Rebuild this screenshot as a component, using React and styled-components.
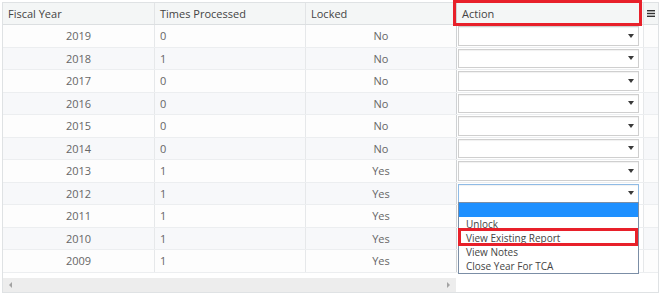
import React from "react";
import styled, { createGlobalStyle } from "styled-components";

const GlobalStyle = createGlobalStyle`
  body {
    margin: 0;
    background: #fff;
    font-family: "Open Sans", "Liberation Sans", sans-serif;
  }
`;

const COLS = "152px 151px 151px 187px 14px";

const rows = [
  { year: 2019, times: 0, locked: "No" },
  { year: 2018, times: 1, locked: "No" },
  { year: 2017, times: 0, locked: "No" },
  { year: 2016, times: 0, locked: "No" },
  { year: 2015, times: 0, locked: "No" },
  { year: 2014, times: 0, locked: "No" },
  { year: 2013, times: 1, locked: "Yes" },
  { year: 2012, times: 1, locked: "Yes", open: true },
  { year: 2011, times: 1, locked: "Yes" },
  { year: 2010, times: 1, locked: "Yes" },
  { year: 2009, times: 1, locked: "Yes" },
];

const options = ["", "Unlock", "View Existing Report", "View Notes", "Close Year For TCA"];

const Grid = styled.div`
  margin: 2px 0 0 2px;
  width: 655px;
  border: 1px solid #dfe2e4;
  font-size: 11px;
  color: #666;
`;

const HeaderRow = styled.div`
  display: grid;
  grid-template-columns: ${COLS};
  height: 22px;
  background: #f4f6f6;
  border-bottom: 1px solid #dcdfe1;
  box-sizing: border-box;
`;

const HeaderCell = styled.div`
  position: relative;
  display: flex;
  align-items: center;
  padding: 0 5px;
  color: #444;
  border-right: 1px solid ${(p) => (p.$edge ? "#cfd2d4" : "#e2e4e6")};
  box-sizing: border-box;
`;

// red annotation frame drawn over a header cell or a list option
const Callout = styled.div`
  position: absolute;
  left: ${(p) => p.$l}px;
  right: ${(p) => p.$r}px;
  top: ${(p) => p.$t}px;
  bottom: ${(p) => p.$b}px;
  border: 3px solid #e8202a;
  pointer-events: none;
  z-index: 3;
`;

const MenuButton = styled.div`
  display: flex;
  align-items: center;
  justify-content: center;
`;

const Row = styled.div`
  display: grid;
  grid-template-columns: ${COLS};
  height: 22.5px;
  box-sizing: border-box;
  border-bottom: 1px solid #eceef0;
  background: ${(p) => (p.$alt ? "#f7f8fa" : "#fdfdfd")};
`;

const Cell = styled.div`
  display: flex;
  align-items: center;
  justify-content: ${(p) => p.$align || "flex-start"};
  padding: 0 5px;
  border-right: 1px solid ${(p) => (p.$edge ? "#cfd2d4" : "#e6e8ea")};
  box-sizing: border-box;
`;

const ActionCell = styled.div`
  display: flex;
  padding: 1px 4px 1px 1px;
  background: #fff;
  border-right: 1px solid #e6e8ea;
  box-sizing: border-box;
`;

const Select = styled.div`
  position: relative;
  flex: 1;
  display: flex;
  align-items: center;
  justify-content: flex-end;
  padding-right: 4px;
  background: #fff;
  border: 1px solid ${(p) => (p.$focus ? "#8fbbe6" : "#cfcfcf")};
  box-shadow: inset 0 1px 1px rgba(0, 0, 0, 0.06);
  box-sizing: border-box;
`;

const Caret = styled.span`
  width: 0;
  height: 0;
  border-left: 3px solid transparent;
  border-right: 3px solid transparent;
  border-top: 4px solid #3a3a3a;
`;

const List = styled.div`
  position: absolute;
  left: -1px;
  right: -1px;
  top: 100%;
  background: #fff;
  border: 1px solid #7b8ea6;
  z-index: 2;
`;

const Option = styled.div`
  position: relative;
  height: 14px;
  line-height: 14px;
  padding-left: 7px;
  font-size: 10px;
  color: #444;
  background: ${(p) => (p.$active ? "#1e90ff" : "#fff")};
`;

const Footer = styled.div`
  display: grid;
  grid-template-columns: 453px 1fr;
  padding-top: 5px;
`;

const Scrollbar = styled.div`
  height: 14px;
  background: #ededed;
  display: flex;
  align-items: center;
  justify-content: space-between;
  padding: 0 6px;
`;

const Arrow = styled.span`
  width: 0;
  height: 0;
  border-top: 3px solid transparent;
  border-bottom: 3px solid transparent;
  ${(p) =>
    p.$dir === "left"
      ? "border-right: 3px solid #a3a3a3;"
      : "border-left: 3px solid #a3a3a3;"}
`;

function ActionSelect({ open }) {
  return (
    <Select $focus={open}>
      <Caret />
      {open && (
        <List>
          {options.map((o, i) => (
            <Option key={i} $active={i === 0}>
              {o || "\u00a0"}
              {o === "View Existing Report" && <Callout $l={-1} $r={0} $t={-3} $b={-1} />}
            </Option>
          ))}
        </List>
      )}
    </Select>
  );
}

export default function App() {
  return (
    <>
      <GlobalStyle />
      <Grid>
        <HeaderRow>
          <HeaderCell>Fiscal Year</HeaderCell>
          <HeaderCell>Times Processed</HeaderCell>
          <HeaderCell $edge>Locked</HeaderCell>
          <HeaderCell>
            Action
            <Callout $l={-4} $r={1} $t={-3} $b={-2} />
          </HeaderCell>
          <MenuButton>
            <svg width="8" height="7" viewBox="0 0 8 7">
              <rect x="0" y="0" width="8" height="1.4" fill="#333" />
              <rect x="0" y="2.8" width="8" height="1.4" fill="#333" />
              <rect x="0" y="5.6" width="8" height="1.4" fill="#333" />
            </svg>
          </MenuButton>
        </HeaderRow>
        {rows.map((r, i) => (
          <Row key={r.year} $alt={i % 2 === 1}>
            <Cell $align="center">{r.year}</Cell>
            <Cell>{r.times}</Cell>
            <Cell $align="center" $edge>{r.locked}</Cell>
            <ActionCell>
              <ActionSelect open={r.open} />
            </ActionCell>
            <div />
          </Row>
        ))}
        <Footer>
          <Scrollbar>
            <Arrow $dir="left" />
            <Arrow $dir="right" />
          </Scrollbar>
          <div />
        </Footer>
      </Grid>
    </>
  );
}
